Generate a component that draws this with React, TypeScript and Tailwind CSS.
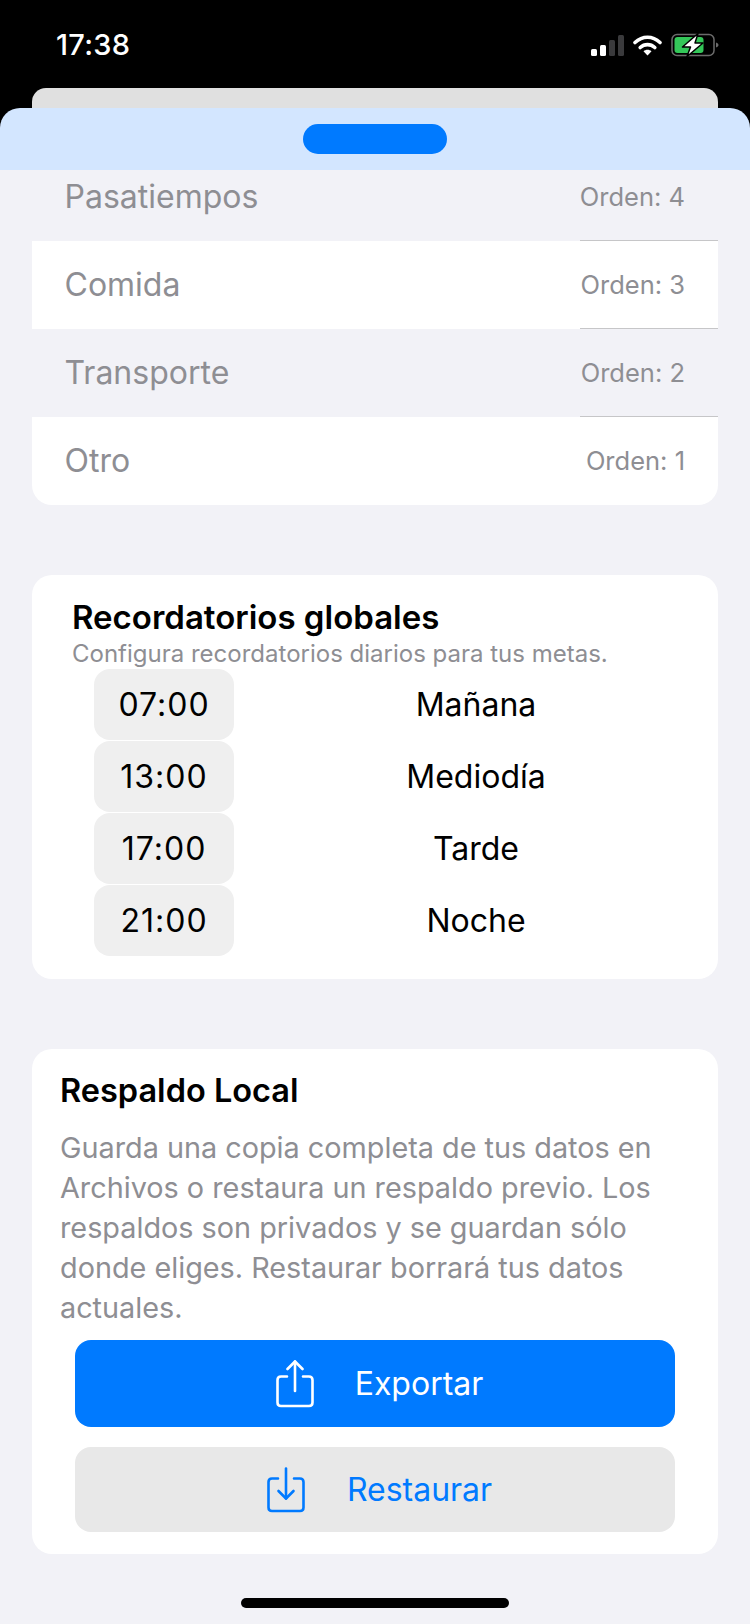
const font = { fontFamily: '"Inter", "Liberation Sans", sans-serif' };

const categories = [
  { name: "Pasatiempos", order: 4, tint: false },
  { name: "Comida", order: 3, tint: true },
  { name: "Transporte", order: 2, tint: false },
  { name: "Otro", order: 1, tint: true },
];

const reminders = [
  { time: "07:00", label: "Mañana" },
  { time: "13:00", label: "Mediodía" },
  { time: "17:00", label: "Tarde" },
  { time: "21:00", label: "Noche" },
];

function StatusIcons() {
  return (
    <div className="flex items-center">
      <svg width="34" height="21" viewBox="0 0 34 21">
        <rect x="0" y="14" width="6" height="7" rx="1.5" fill="#fff" />
        <rect x="9" y="10" width="6" height="11" rx="1.5" fill="#fff" />
        <rect x="18" y="5" width="6" height="16" rx="1.5" fill="#3a3a3c" />
        <rect x="27" y="0" width="6" height="21" rx="1.5" fill="#3a3a3c" />
      </svg>
      <svg className="ml-[8px]" width="29" height="21" viewBox="0 0 29 21">
        <path d="M2 7.500C9.500 0.500 19.500 0.500 27 7.500" fill="none" stroke="#fff" strokeWidth="3.600" strokeLinecap="round" />
        <path d="M7.200 12.500C11.500 8.600 17.500 8.600 21.800 12.500" fill="none" stroke="#fff" strokeWidth="3.600" strokeLinecap="round" />
        <path d="M10.500 16.200L14.500 20.600L18.500 16.200C16.200 14.200 12.800 14.200 10.500 16.200Z" fill="#fff" />
      </svg>
      <svg className="ml-[9px]" width="48" height="24" viewBox="0 0 48 24">
        <rect x="1" y="1.500" width="42" height="21" rx="5" fill="none" stroke="#6b6b6b" strokeWidth="1.500" />
        <rect x="3.500" y="4" width="29" height="16" rx="3" fill="#34c759" />
        <path d="M45 9.500C46.500 10 47.500 11 47.500 12C47.500 13 46.500 14 45 14.500Z" fill="#6b6b6b" />
        <path d="M27 0.500L11.500 14H19.500L16 23.500L32 10H24Z" fill="#fff" stroke="#000" strokeWidth="1.500" strokeLinejoin="round" />
      </svg>
    </div>
  );
}

function ExportIcon() {
  return (
    <svg width="38" height="48" viewBox="0 0 38 48" fill="none" stroke="#fff" strokeWidth="2.600" strokeLinecap="round" strokeLinejoin="round">
      <path d="M11 16.500H5C2.800 16.500 1.500 17.800 1.500 20V42.500C1.500 44.700 2.800 46 5 46H33C35.200 46 36.500 44.700 36.500 42.500V20C36.500 17.800 35.200 16.500 33 16.500H27" />
      <path d="M19 31V1.500" />
      <path d="M11.500 9L19 1.500L26.500 9" />
    </svg>
  );
}

function RestoreIcon() {
  return (
    <svg width="38" height="46" viewBox="0 0 38 46" fill="none" stroke="#007aff" strokeWidth="2.600" strokeLinecap="round" strokeLinejoin="round">
      <path d="M11 11.500H5C2.800 11.500 1.500 12.800 1.500 15V40.500C1.500 42.700 2.800 44 5 44H33C35.200 44 36.500 42.700 36.500 40.500V15C36.500 12.800 35.200 11.500 33 11.500H27" />
      <path d="M19 1.500V31.500" />
      <path d="M11.500 24L19 31.500L26.500 24" />
    </svg>
  );
}

function CategoryRow({ name, order, tint, first }: { name: string; order: number; tint: boolean; first: boolean }) {
  return (
    <div className={`relative flex h-[88px] items-center justify-between pl-[32.500px] pr-[33px] ${tint ? "bg-white" : "bg-[#f2f2f7]"}`}>
      {!first && <div className="absolute right-0 top-[-1px] h-px w-[138px] bg-[#c6c6c8]" />}
      <span className="text-[32px] text-[#8e8e93]">{name}</span>
      <span className="text-[25.5px] text-[#8e8e93]">Orden: {order}</span>
    </div>
  );
}

export default function App() {
  return (
    <div className="h-[1624px] w-[750px] overflow-hidden bg-black" style={font}>
      <div className="flex h-[88px] items-start justify-between pl-[56px] pr-[31px] pt-[27px]">
        <span className="text-[29px] font-medium leading-[36px] tracking-[0.3px] text-white">17:38</span>
        <div className="pt-[6px]">
          <StatusIcons />
        </div>
      </div>
      <div className="mx-[32px] h-[20px] rounded-t-[14px] bg-[#e0e0e0]" />
      <div className="relative z-10 flex h-[62px] justify-center rounded-t-[20px] bg-[#d3e6ff] pt-[16px]">
        <div className="h-[30px] w-[144px] rounded-[15px] bg-[#007aff]" />
      </div>
      <div className="flex h-[1454px] flex-col bg-[#f2f2f7] px-[32px]">
        <div className="-mt-[17px] overflow-hidden rounded-b-[20px]">
          {categories.map((c, i) => (
            <CategoryRow key={c.name} name={c.name} order={c.order} tint={c.tint} first={i === 0} />
          ))}
        </div>

        <div className="mt-[70px] h-[404px] rounded-[20px] bg-white pt-[22px]">
          <h2 className="pl-[40px] text-[33px] font-semibold leading-[40px] text-black">Recordatorios globales</h2>
          <p className="pl-[40px] pt-[1px] text-[24px] leading-[32px] text-[#8e8e93]">Configura recordatorios diarios para tus metas.</p>
          <div className="-mt-[1px] pl-[62px]">
            {reminders.map((r) => (
              <div key={r.time} className="flex h-[72px] items-start">
                <div className="flex h-[71px] w-[140px] items-center justify-center rounded-[16px] bg-[#efefef] pt-[1px] text-[32px] tracking-[1px] text-black">{r.time}</div>
                <div className="flex h-[71px] flex-1 items-center justify-center pt-[1px] text-[32px] text-black">{r.label}</div>
              </div>
            ))}
          </div>
        </div>

        <div className="mt-[70px] h-[505px] rounded-[20px] bg-white px-[28px] pt-[20px]">
          <h2 className="text-[32.500px] font-semibold leading-[44px] text-black">Respaldo Local</h2>
          <p className="mt-[15px] text-[28.800px] leading-[40px] text-[#8e8e93]">
            Guarda una copia completa de tus datos en Archivos o restaura un respaldo previo. Los respaldos son privados y se guardan sólo donde eliges. Restaurar borrará tus datos actuales.
          </p>
          <div className="mx-[15px] mt-[12px] flex flex-col gap-[20px]">
            <button className="flex h-[87px] items-center justify-center gap-[41px] rounded-[16px] bg-[#007aff] pl-[9px] text-[32px] text-white">
              <ExportIcon />
              <span>Exportar</span>
            </button>
            <button className="flex h-[85px] items-center justify-center gap-[42px] rounded-[16px] bg-[#e8e8e8] pl-[9px] text-[32px] text-[#007aff]">
              <RestoreIcon />
              <span>Restaurar</span>
            </button>
          </div>
        </div>

        <div className="mx-auto mt-[44px] h-[10px] w-[268px] rounded-full bg-black" />
      </div>
    </div>
  );
}
